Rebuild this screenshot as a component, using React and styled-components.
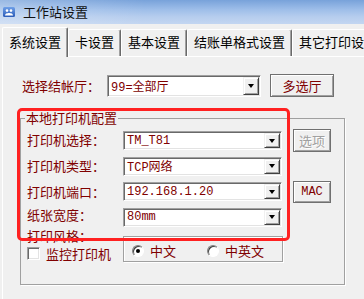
import React from "react";
import styled, { createGlobalStyle } from "styled-components";

const CJK = `"Noto Sans CJK SC", "DejaVu Sans", sans-serif`;
const MONO = `"Liberation Mono", "Noto Sans CJK SC", monospace`;
const MAROON = "#800000";

const GlobalStyle = createGlobalStyle`
  html, body {
    margin: 0;
    padding: 0;
    background: #f0f0f0;
  }
  body {
    font-family: ${CJK};
  }
`;

const Window = styled.div`
  position: relative;
  width: 364px;
  height: 299px;
  overflow: hidden;
  background: #f0f0f0;
  font-family: ${CJK};
  font-size: 13px;
  color: #000;
`;

const TitleBar = styled.div`
  height: 24px;
  display: flex;
  align-items: center;
  gap: 8px;
  padding-left: 3px;
  background: linear-gradient(
      to right,
      rgba(255, 255, 255, 0.25),
      rgba(255, 255, 255, 0) 40%
    ),
    linear-gradient(to bottom, #78a2da 0%, #9ebee9 40%, #b6cdee 70%, #c3d6f1 100%);
`;

const TitleText = styled.span`
  font-size: 13px;
  line-height: 16px;
  color: #111;
`;

const TabStrip = styled.div`
  display: flex;
  align-items: flex-end;
  height: 29px;
  margin-top: 3px;
  padding-left: 2px;
`;

const Tab = styled.div`
  position: relative;
  z-index: ${(p) => (p.$active ? 1 : 0)};
  flex-shrink: 0;
  display: flex;
  align-items: center;
  height: ${(p) => (p.$active ? 30 : 27)}px;
  margin-bottom: ${(p) => (p.$active ? -1 : 0)}px;
  padding: 0 6px 2px;
  box-sizing: border-box;
  background: #f0f0f0;
  border-top: 1px solid #fff;
  border-left: 1px solid #fff;
  border-right: 1px solid #696969;
  box-shadow: inset -1px 0 #a0a0a0;
  border-radius: 2px 2px 0 0;
  white-space: nowrap;
  line-height: 16px;
`;

const TabPanel = styled.div`
  height: 260px;
  margin-left: 2px;
  border-top: 1px solid #fff;
  border-left: 1px solid #fff;
  padding-top: 17px;
`;

const HallRow = styled.div`
  display: flex;
  align-items: center;
  height: 23px;
  margin-left: 19px;
`;

const Label = styled.span`
  flex-shrink: 0;
  width: ${(p) => p.$width || 96}px;
  color: ${MAROON};
  line-height: 14px;
  white-space: nowrap;
  align-self: center;
  margin-top: ${(p) => -(p.$lift || 0)}px;
`;

const Combo = styled.div`
  display: flex;
  align-items: stretch;
  width: ${(p) => p.$width}px;
  height: ${(p) => p.$height}px;
  box-sizing: border-box;
  background: #fff;
  border: 1px solid;
  border-color: #a0a0a0 #fff #fff #a0a0a0;
  box-shadow: inset 1px 1px 0 #696969, inset -1px -1px 0 #e3e3e3;
  padding: 1px;
`;

const ComboValue = styled.span`
  flex: 1;
  padding-left: 2px;
  font-family: ${MONO};
  font-size: 12px;
  color: ${MAROON};
  display: flex;
  align-items: center;
  white-space: nowrap;
  overflow: hidden;
`;

const DropButton = styled.span`
  width: 16px;
  flex-shrink: 0;
  box-sizing: border-box;
  background: #f0f0f0;
  border: 1px solid;
  border-color: #f0f0f0 #404040 #404040 #f0f0f0;
  box-shadow: inset 1px 1px 0 #fff, inset -1px -1px 0 #a0a0a0;
  display: flex;
  align-items: center;
  justify-content: center;

  &::after {
    content: "";
    border-left: 3.5px solid transparent;
    border-right: 3.5px solid transparent;
    border-top: 4px solid #000;
  }
`;

const Button = styled.button`
  width: ${(p) => p.$width}px;
  height: ${(p) => p.$height}px;
  margin: 0;
  margin-left: ${(p) => p.$gap || 0}px;
  padding: 0;
  box-sizing: border-box;
  background: #f0f0f0;
  border: 1px solid #707070;
  box-shadow: inset 1px 1px 0 #fff, inset -1px -1px 0 #a0a0a0;
  font-family: ${(p) => (p.$mono ? MONO : CJK)};
  font-size: ${(p) => (p.$mono ? 12 : 13)}px;
  color: ${(p) => (p.disabled ? "#a0a0a0" : MAROON)};
  text-shadow: ${(p) => (p.disabled ? "1px 1px 0 #fff" : "none")};
  justify-self: end;
  align-self: center;
  cursor: default;
`;

const GroupBox = styled.fieldset`
  width: 325px;
  min-width: 0;
  box-sizing: border-box;
  margin: 14px 0 0 17px;
  padding: 6px 0 22px 6px;
  border: 1px solid #a0a0a0;
  box-shadow: 1px 1px 0 #fff;
`;

const Legend = styled.legend`
  margin-left: -2px;
  padding: 0 1px;
  line-height: 14px;
  color: ${MAROON};
`;

const FormGrid = styled.div`
  display: grid;
  grid-template-columns: 96px 159px 49px;
  grid-auto-rows: 19px;
  row-gap: 6.5px;
`;

const BottomArea = styled.div`
  display: flex;
  align-items: flex-start;
`;

const LeftColumn = styled.div`
  width: 96px;
  display: flex;
  flex-direction: column;
`;

const StyleLabel = styled(Label)`
  margin-top: 2.5px;
`;

const CheckRow = styled.label`
  display: flex;
  align-items: center;
  gap: 6px;
  margin-top: 4px;
  height: 13px;
  color: ${MAROON};
  white-space: nowrap;
`;

const CheckBox = styled.span`
  width: 13px;
  height: 13px;
  box-sizing: border-box;
  background: #fff;
  border: 1px solid;
  border-color: #a0a0a0 #fff #fff #a0a0a0;
  box-shadow: inset 1px 1px 0 #696969, inset -1px -1px 0 #e3e3e3;
`;

const RadioBox = styled.div`
  display: flex;
  align-items: center;
  gap: 31px;
  width: 160px;
  height: 26px;
  margin-top: 9.5px;
  padding: 3px 0 0 8px;
  box-sizing: border-box;
  border: 1px solid #a0a0a0;
  box-shadow: 1px 1px 0 #fff, inset 1px 1px 0 #fff;
`;

const RadioItem = styled.label`
  display: flex;
  align-items: center;
  gap: 6px;
  color: ${MAROON};
  white-space: nowrap;
`;

const RadioDot = styled.span`
  width: 12px;
  height: 12px;
  box-sizing: border-box;
  border-radius: 50%;
  background: #fff;
  border: 1px solid;
  border-color: #808080 #fff #fff #808080;
  box-shadow: inset 1px 1px 0 #404040;
  display: flex;
  align-items: center;
  justify-content: center;

  &::after {
    content: "";
    width: 4px;
    height: 4px;
    border-radius: 50%;
    background: ${(p) => (p.$checked ? "#000" : "transparent")};
  }
`;

const Highlight = styled.div`
  position: absolute;
  left: 17px;
  top: 108px;
  width: 273px;
  height: 133px;
  box-sizing: border-box;
  border: 3px solid #ff2121;
  border-radius: 5px;
  pointer-events: none;
`;

function AppIcon() {
  return (
    <svg width="12" height="10" viewBox="0 0 12 10">
      <defs>
        <linearGradient id="ic" x1="0" y1="0" x2="0" y2="1">
          <stop offset="0" stopColor="#6fa0e8" />
          <stop offset="1" stopColor="#2c5cb8" />
        </linearGradient>
      </defs>
      <rect x="0" y="0" width="12" height="10" rx="1.5" fill="url(#ic)" />
      <circle cx="4" cy="3.6" r="1.3" fill="#fff" />
      <circle cx="8" cy="3.6" r="1.3" fill="#fff" />
      <path d="M2 8.5 C2 6 6 6 6 6 C6 6 10 6 10 8.5 Z" fill="#fff" />
    </svg>
  );
}

function ComboBox({ value, width = 159, height = 19 }) {
  return (
    <Combo $width={width} $height={height}>
      <ComboValue>{value}</ComboValue>
      <DropButton />
    </Combo>
  );
}

const tabs = ["系统设置", "卡设置", "基本设置", "结账单格式设置", "其它打印设置"];

const printerRows = [
  { label: "打印机选择：", value: "TM_T81", lift: 2 },
  { label: "打印机类型：", value: "TCP网络", lift: 0 },
  { label: "打印机端口：", value: "192.168.1.20", lift: 0 },
  { label: "纸张宽度：", value: "80mm", lift: 4 },
];

export default function App() {
  return (
    <Window>
      <GlobalStyle />
      <TitleBar>
        <AppIcon />
        <TitleText>工作站设置</TitleText>
      </TitleBar>
      <TabStrip>
        {tabs.map((t, i) => (
          <Tab key={t} $active={i === 0}>
            {t}
          </Tab>
        ))}
      </TabStrip>
      <TabPanel>
        <HallRow>
          <Label $width={85}>选择结帐厅：</Label>
          <ComboBox value="99=全部厅" width={154} height={22} />
          <Button $width={64} $height={23} $gap={9}>
            多选厅
          </Button>
        </HallRow>
        <GroupBox>
          <Legend>本地打印机配置</Legend>
          <FormGrid>
            {printerRows.map((r, i) => (
              <React.Fragment key={r.label}>
                <Label $lift={r.lift}>{r.label}</Label>
                <ComboBox value={r.value} />
                {i === 0 && (
                  <Button $width={38} $height={23} disabled>
                    选项
                  </Button>
                )}
                {i === 2 && (
                  <Button $width={38} $height={22} $mono>
                    MAC
                  </Button>
                )}
                {(i === 1 || i === 3) && <span />}
              </React.Fragment>
            ))}
          </FormGrid>
          <BottomArea>
            <LeftColumn>
              <StyleLabel>打印风格：</StyleLabel>
              <CheckRow>
                <CheckBox />
                监控打印机
              </CheckRow>
            </LeftColumn>
            <RadioBox>
              <RadioItem>
                <RadioDot $checked />
                中文
              </RadioItem>
              <RadioItem>
                <RadioDot />
                中英文
              </RadioItem>
            </RadioBox>
          </BottomArea>
        </GroupBox>
      </TabPanel>
      <Highlight />
    </Window>
  );
}
